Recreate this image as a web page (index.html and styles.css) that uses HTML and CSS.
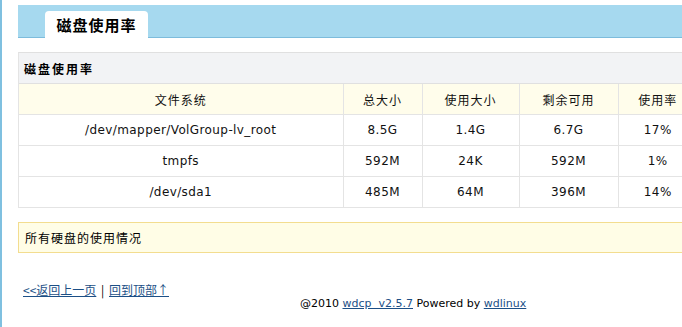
FILE: index.html
```html
<!DOCTYPE html>
<html lang="zh-CN">
<head>
<meta charset="utf-8">
<title>磁盘使用率</title>
<link rel="stylesheet" href="styles.css">
</head>
<body>
<div class="frame">
  <div class="page">
    <div class="titlebar">
      <div class="tab">磁盘使用率</div>
    </div>

    <div class="panel">
      <div class="panel-head">磁盘使用率</div>
      <table class="grid">
        <colgroup>
          <col class="c1"><col class="c2"><col class="c3"><col class="c4"><col class="c5">
        </colgroup>
        <thead>
          <tr><th>文件系统</th><th>总大小</th><th>使用大小</th><th>剩余可用</th><th>使用率</th></tr>
        </thead>
        <tbody>
          <tr><td>/dev/mapper/VolGroup-lv_root</td><td>8.5G</td><td>1.4G</td><td>6.7G</td><td>17%</td></tr>
          <tr><td>tmpfs</td><td>592M</td><td>24K</td><td>592M</td><td>1%</td></tr>
          <tr><td>/dev/sda1</td><td>485M</td><td>64M</td><td>396M</td><td>14%</td></tr>
        </tbody>
      </table>
    </div>

    <div class="note">所有硬盘的使用情况</div>

    <div class="nav">
      <a href="#">&lt;&lt;返回上一页</a> <span class="sep">|</span> <a href="#">回到顶部↑</a>
    </div>

    <div class="footer">@2010 <a href="#">wdcp&nbsp; v2.5.7</a> Powered by <a href="#">wdlinux</a></div>
  </div>
</div>
</body>
</html>
```

FILE: styles.css
```css
html, body {
  margin: 0;
  padding: 0;
  overflow: hidden;
  background: #fff;
}

body {
  font-family: "DejaVu Sans", Verdana, "Noto Sans CJK SC", sans-serif;
  font-size: 12px;
  color: #000;
}

.frame {
  border-left: 2px solid #7fc0e0;
  min-height: 100vh;
  box-sizing: border-box;
}

.page {
  width: 800px;
  padding: 5px 0 0 16px;
}

.titlebar {
  height: 32px;
  background: #a6d9ef;
  border-bottom: 1px solid #7dbcdc;
  padding-left: 27px;
  display: flex;
  align-items: flex-end;
}

.tab {
  width: 103px;
  height: 27px;
  margin-bottom: -1px;
  background: #fff;
  border-radius: 4px 4px 0 0;
  font-family: "Noto Sans CJK SC", sans-serif;
  font-weight: bold;
  font-size: 15px;
  letter-spacing: 1px;
  display: flex;
  align-items: center;
  justify-content: center;
}

.panel {
  margin-top: 14px;
  width: 678px;
  border: 1px solid #e4e4e4;
  border-top-color: #e0e0e0;
}

.panel-head {
  height: 30px;
  background: #f2f3f5;
  border-bottom: 1px solid #e0e0e0;
  font-family: "Noto Sans CJK SC", sans-serif;
  font-weight: bold;
  font-size: 12px;
  letter-spacing: 2px;
  padding-left: 5px;
  display: flex;
  align-items: center;
}

.grid {
  width: 100%;
  border-collapse: collapse;
  table-layout: fixed;
}

.grid .c1 { width: 324px; }
.grid .c2 { width: 79px; }
.grid .c3 { width: 97px; }
.grid .c4 { width: 99px; }

.grid th, .grid td {
  height: 30px;
  padding: 0;
  text-align: center;
  border-left: 1px solid #e4e4e4;
  border-bottom: 1px solid #e4e4e4;
  font-size: 12px;
  font-weight: normal;
  color: #111;
}

.grid td { letter-spacing: 0.4px; }

.grid tr > :first-child { border-left: none; }
.grid tbody tr:last-child td { border-bottom: none; }

.grid th {
  background: #fffdeb;
  font-family: "Noto Sans CJK SC", sans-serif;
  letter-spacing: 1px;
}

.note {
  margin-top: 14px;
  width: 672px;
  height: 29px;
  border: 1px solid #f3dd8f;
  background: #fffde6;
  padding-left: 6px;
  font-family: "Noto Sans CJK SC", sans-serif;
  font-size: 12px;
  letter-spacing: 1px;
  display: flex;
  align-items: center;
}

.nav {
  margin-top: 29px;
  padding-left: 5px;
  font-family: "Noto Sans CJK SC", sans-serif;
  font-size: 12px;
  line-height: 16px;
}

.nav a, .footer a {
  color: #1c4f86;
  text-decoration: underline;
}

.sep { margin: 0 2px; }

.footer {
  margin-top: -2px;
  padding-left: 282px;
  font-size: 11px;
  line-height: 16px;
}
```
